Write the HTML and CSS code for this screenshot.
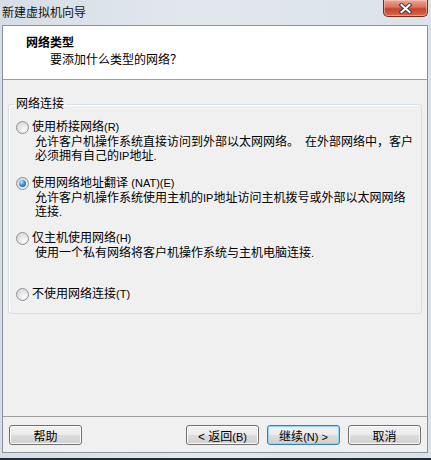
FILE: index.html
```html
<!DOCTYPE html>
<html lang="zh-CN">
<head>
    <meta charset="UTF-8">
    <title>新建虚拟机向导</title>
    <link rel="stylesheet" href="styles.css">
</head>
<body>

    <div class="window">
        <!-- Titelleiste -->
        <div class="titlebar">
            <span class="title">新建虚拟机向导</span>
            <div class="close">
                <svg width="13" height="11" viewBox="0 0 13 11">
                    <path d="M2.5 2 L10.5 9 M10.5 2 L2.5 9" stroke="#3c3c3c" stroke-width="4" stroke-linecap="square" fill="none"/>
                    <path d="M2.5 2 L10.5 9 M10.5 2 L2.5 9" stroke="#ffffff" stroke-width="2" stroke-linecap="square" fill="none"/>
                </svg>
            </div>
        </div>

        <div class="client">
            <div class="header">
                <div class="header-title">网络类型</div>
                <div class="header-sub">要添加什么类型的网络？</div>
            </div>

            <div class="content">
                <fieldset class="group">
                    <legend>网络连接</legend>

                    <div class="option option-first">
                        <div class="option-label"><span class="radio"></span>使用桥接网络<span class="lat">(R)</span></div>
                        <div class="option-desc">允许客户机操作系统直接访问到外部以太网网络。&ensp;在外部网络中，客户<br>必须拥有自己的<span class="lat">IP</span>地址<span class="lat">.</span></div>
                    </div>

                    <div class="option">
                        <div class="option-label"><span class="radio on"></span>使用网络地址翻译 <span class="lat">(NAT)(E)</span></div>
                        <div class="option-desc">允许客户机操作系统使用主机的<span class="lat">IP</span>地址访问主机拨号或外部以太网网络<br>连接<span class="lat">.</span></div>
                    </div>

                    <div class="option">
                        <div class="option-label"><span class="radio"></span>仅主机使用网络<span class="lat">(H)</span></div>
                        <div class="option-desc">使用一个私有网络将客户机操作系统与主机电脑连接<span class="lat">.</span></div>
                    </div>

                    <div class="option option-last">
                        <div class="option-label"><span class="radio"></span>不使用网络连接<span class="lat">(T)</span></div>
                    </div>
                </fieldset>

                <div class="footer">
                    <button class="btn">帮助</button>
                    <div class="nav">
                        <button class="btn">&lt; 返回<span class="lat">(B)</span></button>
                        <button class="btn btn-default">继续<span class="lat">(N) &gt;</span></button>
                        <button class="btn">取消</button>
                    </div>
                </div>
            </div>
        </div>

        <div class="taskbar"></div>
    </div>

</body>
</html>
```

FILE: styles.css
```css
body {
    margin: 0;
    padding: 0;
    overflow: hidden;
    font-family: "Liberation Sans", "Noto Sans CJK SC", sans-serif;
    font-size: 12px;
    color: #000000;
}

.window {
    width: 431px;
    height: 460px;
    display: flex;
    flex-direction: column;
    background: linear-gradient(to right, #d5dde6 0%, #e3e8ee 45%, #dbe2ea 100%);
}

/* Titelleiste */
.titlebar {
    height: 25px;
    display: flex;
    align-items: flex-start;
    justify-content: space-between;
}

.title {
    font-family: "Noto Sans CJK SC", sans-serif;
    line-height: 16px;
    padding: 4px 0 0 2px;
    color: #111111;
}

.close {
    width: 45px;
    height: 17px;
    margin-right: 3px;
    box-sizing: border-box;
    border: 1px solid #7d2a1c;
    border-top: none;
    border-radius: 0 0 5px 5px;
    background: linear-gradient(#e9a99a 0%, #d8705b 45%, #c8442a 55%, #d9664c 100%);
    box-shadow: inset 0 0 0 1px rgba(255, 210, 200, 0.5);
    display: flex;
    align-items: center;
    justify-content: center;
}

/* Fensterinhalt */
.client {
    height: 428px;
    margin: 0 3px 0 2px;
    box-sizing: border-box;
    border: 1px solid #8a939c;
    display: flex;
    flex-direction: column;
}

.header {
    height: 45px;
    padding: 8px 0 0 23px;
    background-color: #ffffff;
    border-bottom: 1px solid #a0a0a0;
    font-family: "Noto Sans CJK SC", sans-serif;
}

.header-title {
    font-weight: bold;
    line-height: 16px;
}

.header-sub {
    line-height: 16px;
    margin: 1px 0 0 24px;
}

.content {
    flex-grow: 1;
    background-color: #f0f0f0;
    display: flex;
    flex-direction: column;
}

.group {
    margin: 16px 5px 0 5px;
    padding: 0 6px 11px 7px;
    border: 1px solid #d5dfe5;
    border-radius: 3px;
    box-shadow: inset 1px 1px 0 #ffffff;
}

.group legend {
    padding: 0 2px;
    margin-left: -2px;
    line-height: 16px;
}

.option {
    margin-top: 12px;
}

.option-first {
    margin-top: 7px;
}

.option + .option + .option {
    margin-top: 11px;
}

.option-last {
    margin-top: 26px !important;
}

.option-label {
    display: flex;
    align-items: center;
    line-height: 16px;
    white-space: pre;
}

.option-desc {
    margin-left: 19px;
    line-height: 14px;
    white-space: nowrap;
}

.lat {
    font-size: 11px;
}

/* Radiobuttons */
.radio {
    width: 13px;
    height: 13px;
    margin-right: 3px;
    box-sizing: border-box;
    border-radius: 50%;
    border: 1px solid #8c9196;
    background: radial-gradient(circle at 65% 70%, #fbfbfb 0%, #e6e6e6 45%, #cfcfcf 100%);
    display: flex;
    align-items: center;
    justify-content: center;
}

.radio.on::after {
    content: "";
    width: 7px;
    height: 7px;
    border-radius: 50%;
    background: radial-gradient(circle at 35% 30%, #c4ecff 0%, #3c96da 45%, #0c4b8c 100%);
}

/* Schaltflächen */
.footer {
    margin-top: auto;
    border-top: 1px solid #a0a0a0;
    padding: 8px 6px 7px 6px;
    display: flex;
    justify-content: space-between;
}

.nav {
    display: flex;
    gap: 8px;
}

.btn {
    width: 73px;
    height: 20px;
    padding: 0;
    box-sizing: border-box;
    font-family: "Liberation Sans", "Noto Sans CJK SC", sans-serif;
    font-size: 12px;
    color: #000000;
    border: 1px solid #707070;
    border-radius: 3px;
    background: linear-gradient(#f2f2f2 0%, #ebebeb 48%, #dddddd 52%, #cfcfcf 100%);
    box-shadow: inset 0 0 0 1px #fbfbfb;
    cursor: pointer;
}

.btn-default {
    border-color: #3c7fb1;
    box-shadow: inset 0 0 0 1px #8fd6f6;
}

.taskbar {
    height: 2px;
    margin-top: 5px;
    background-color: #1f2b37;
}
```
